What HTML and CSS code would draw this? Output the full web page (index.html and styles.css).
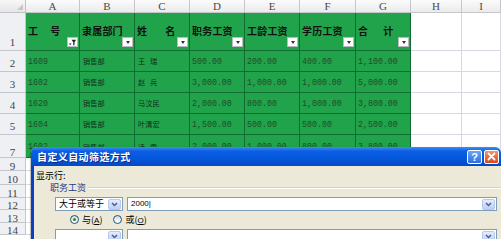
FILE: index.html
```html
<!DOCTYPE html>
<html lang="zh">
<head>
<meta charset="utf-8">
<title>自定义自动筛选方式</title>
<link rel="stylesheet" href="styles.css">
</head>
<body>
<div class="sheet">
  <div class="c corner"><span class="sel"></span></div>
  <div class="c ch">A</div><div class="c ch">B</div><div class="c ch">C</div><div class="c ch">D</div><div class="c ch">E</div><div class="c ch">F</div><div class="c ch">G</div><div class="c ch">H</div><div class="c ch">I</div>

  <div class="c rh rh1">1</div>
  <div class="c g gh"><span>工</span><span class="g12"></span><span>号</span><span class="fb"><svg width="10" height="9" viewBox="0 0 10 9"><path d="M1 5.5h3L2.5 7.5z" fill="#222"/><path d="M4 1.5h5L7.2 4.2v3.3H5.8V4.2z" fill="#222"/></svg></span></div>
  <div class="c g gh">隶属部门<span class="fb"><i class="tri"></i></span></div>
  <div class="c g gh"><span>姓</span><span class="g19"></span><span>名</span><span class="fb"><i class="tri"></i></span></div>
  <div class="c g gh">职务工资<span class="fb"><i class="tri"></i></span></div>
  <div class="c g gh">工龄工资<span class="fb"><i class="tri"></i></span></div>
  <div class="c g gh">学历工资<span class="fb"><i class="tri"></i></span></div>
  <div class="c g gh"><span>合</span><span class="g16"></span><span>计</span><span class="fb"><i class="tri"></i></span></div>
  <div class="c w"></div><div class="c w"></div>

  <div class="c rh">2</div>
  <div class="c g num">1609</div><div class="c g zh">销售部</div><div class="c g zh">王&nbsp;&nbsp;&nbsp;瑞</div><div class="c g num">500.00</div><div class="c g num">200.00</div><div class="c g num">400.00</div><div class="c g num">1,100.00</div>
  <div class="c w"></div><div class="c w"></div>

  <div class="c rh">3</div>
  <div class="c g num">1602</div><div class="c g zh">销售部</div><div class="c g zh">赵&nbsp;&nbsp;&nbsp;兵</div><div class="c g num">3,000.00</div><div class="c g num">1,000.00</div><div class="c g num">1,000.00</div><div class="c g num">5,000.00</div>
  <div class="c w"></div><div class="c w"></div>

  <div class="c rh">4</div>
  <div class="c g num">1620</div><div class="c g zh">销售部</div><div class="c g zh">马汶民</div><div class="c g num">2,000.00</div><div class="c g num">800.00</div><div class="c g num">1,000.00</div><div class="c g num">3,800.00</div>
  <div class="c w"></div><div class="c w"></div>

  <div class="c rh">5</div>
  <div class="c g num">1604</div><div class="c g zh">销售部</div><div class="c g zh">叶清宏</div><div class="c g num">1,500.00</div><div class="c g num">500.00</div><div class="c g num">500.00</div><div class="c g num">2,500.00</div>
  <div class="c w"></div><div class="c w"></div>

  <div class="c rh rh7">7</div>
  <div class="c g num r7">1602</div><div class="c g zh r7">销售部</div><div class="c g zh r7">凌&nbsp;&nbsp;&nbsp;霄</div><div class="c g num r7">2,000.00</div><div class="c g num r7">1,000.00</div><div class="c g num r7">800.00</div><div class="c g num r7">3,800.00</div>
  <div class="c w"></div><div class="c w"></div>

  <div class="c rh">9</div><div class="c w"></div><div class="c w"></div><div class="c w"></div><div class="c w"></div><div class="c w"></div><div class="c w"></div><div class="c w"></div><div class="c w"></div><div class="c w"></div>
  <div class="c rh">10</div><div class="c w"></div><div class="c w"></div><div class="c w"></div><div class="c w"></div><div class="c w"></div><div class="c w"></div><div class="c w"></div><div class="c w"></div><div class="c w"></div>
  <div class="c rh">11</div><div class="c w"></div><div class="c w"></div><div class="c w"></div><div class="c w"></div><div class="c w"></div><div class="c w"></div><div class="c w"></div><div class="c w"></div><div class="c w"></div>
  <div class="c rh">12</div><div class="c w"></div><div class="c w"></div><div class="c w"></div><div class="c w"></div><div class="c w"></div><div class="c w"></div><div class="c w"></div><div class="c w"></div><div class="c w"></div>
  <div class="c rh">13</div><div class="c w"></div><div class="c w"></div><div class="c w"></div><div class="c w"></div><div class="c w"></div><div class="c w"></div><div class="c w"></div><div class="c w"></div><div class="c w"></div>
  <div class="c rh">14</div><div class="c w"></div><div class="c w"></div><div class="c w"></div><div class="c w"></div><div class="c w"></div><div class="c w"></div><div class="c w"></div><div class="c w"></div><div class="c w"></div>
</div>

<div class="dlg">
  <div class="tb">
    <span class="title">自定义自动筛选方式</span>
    <span class="btns">
      <span class="tbtn help">?</span>
      <span class="tbtn close"><svg width="9" height="9" viewBox="0 0 9 9"><path d="M1.5 1.5l6 6M7.5 1.5l-6 6" stroke="#fff" stroke-width="1.8" stroke-linecap="round"/></svg></span>
    </span>
  </div>
  <div class="body">
    <div class="lbl">显示行:</div>
    <div class="grp"><span class="grpname">职务工资</span><span class="grpline"></span></div>
    <div class="crow">
      <div class="combo"><span class="ctext">大于或等于</span><span class="arr"><svg width="7" height="5" viewBox="0 0 7 5"><path d="M1 1l2.5 2.5L6 1" stroke="#4a5f8c" stroke-width="1.5" fill="none"/></svg></span></div>
      <div class="combo wide"><span class="ctext val">2000|</span><span class="arr"><svg width="7" height="5" viewBox="0 0 7 5"><path d="M1 1l2.5 2.5L6 1" stroke="#4a5f8c" stroke-width="1.5" fill="none"/></svg></span></div>
    </div>
    <div class="radios">
      <span class="radio on"></span><span class="rlabel">与(<u>A</u>)</span>
      <span class="radio"></span><span class="rlabel">或(<u>O</u>)</span>
    </div>
    <div class="crow">
      <div class="combo"><span class="ctext"></span><span class="arr"><svg width="7" height="5" viewBox="0 0 7 5"><path d="M1 1l2.5 2.5L6 1" stroke="#4a5f8c" stroke-width="1.5" fill="none"/></svg></span></div>
      <div class="combo wide"><span class="ctext"></span><span class="arr"><svg width="7" height="5" viewBox="0 0 7 5"><path d="M1 1l2.5 2.5L6 1" stroke="#4a5f8c" stroke-width="1.5" fill="none"/></svg></span></div>
    </div>
  </div>
</div>
</body>
</html>
```

FILE: styles.css
```css
* { box-sizing: border-box; margin: 0; padding: 0; }
html, body { overflow: hidden; }
body {
  width: 501px;
  height: 239px;
  background: #fff;
  position: relative;
  font-family: "Noto Sans CJK SC", sans-serif;
}
.sheet {
  display: grid;
  grid-template-columns: 26px 54px 55px 55px 55px 55px 56px 55px 51px 39px;
  grid-template-rows: 13px 38px 21px 21px 21px 21px 23px 13px 14px 13px 12px 13px 12px;
}
.c {
  border-right: 1px solid #d5dae2;
  border-bottom: 1px solid #d5dae2;
  overflow: hidden;
  white-space: nowrap;
  display: flex;
  align-items: center;
  position: relative;
}
.corner {
  background: linear-gradient(#f7f7f7, #e6e6e6);
  border-color: #bfc3c8;
}
.sel {
  position: absolute;
  right: 2px;
  bottom: 2px;
  width: 0;
  height: 0;
  border-left: 6px solid transparent;
  border-bottom: 6px solid #c8c8c8;
}
.ch {
  background: linear-gradient(#fbfbfb, #ebebeb);
  border-color: #c3c6cb;
  justify-content: center;
  font-family: "Liberation Serif", serif;
  font-size: 11px;
  color: #4a4a4a;
  line-height: 12px;
}
.rh {
  background: #eef0f3;
  border-color: #c3c6cb;
  justify-content: center;
  font-family: "Liberation Serif", serif;
  font-size: 11px;
  color: #444;
  padding-top: 3px;
}
.rh1 { align-items: flex-end; padding-bottom: 2px; }
.rh7 { align-items: flex-start; padding-top: 11px; }
.g {
  background: #21a34b;
  border-color: #0f6d31;
  color: #1f4a27;
  padding-left: 2px;
}
.w { background: #fff; }
.num {
  font-family: "Liberation Mono", monospace;
  font-size: 8.3px;
  color: #1f4d27;
}
.zh { font-size: 7.2px; padding-left: 3px; color: #0f2e17; }
.r7 { align-items: flex-start; padding-top: 7px; }
.gh {
  font-size: 10px;
  font-weight: bold;
  color: #111;
  padding-left: 2px;
  padding-bottom: 2px;
  letter-spacing: 0.2px;
}
.g12 { display: inline-block; width: 12px; }
.g19 { display: inline-block; width: 18px; }
.g16 { display: inline-block; width: 15px; }
.fb {
  position: absolute;
  right: 1px;
  bottom: 3px;
  width: 11px;
  height: 10px;
  background: #fff;
  border: 1px solid #b8bcc0;
  display: flex;
  align-items: center;
  justify-content: center;
}
.tri {
  width: 0;
  height: 0;
  border-left: 2.5px solid transparent;
  border-right: 2.5px solid transparent;
  border-top: 3px solid #333;
}

/* dialog */
.dlg {
  position: absolute;
  left: 31px;
  top: 147px;
  width: 470px;
  height: 92px;
  background: #ece9d8;
  border-radius: 6px 6px 0 0;
  overflow: hidden;
  box-shadow: -1px 0 1px rgba(0,0,0,0.25);
}
.tb {
  height: 19px;
  background: linear-gradient(#3d8ef6 0%, #0c5fe3 22%, #0457dc 60%, #0349c4 100%);
  display: flex;
  align-items: center;
  justify-content: space-between;
  padding: 0 2px 0 6px;
}
.title {
  color: #fff;
  font-size: 10px;
  font-weight: bold;
  letter-spacing: 0.4px;
  text-shadow: 1px 1px 0 #0a2a8a;
}
.btns { display: flex; gap: 2px; }
.tbtn {
  width: 15px;
  height: 14px;
  border: 1px solid #fff;
  border-radius: 2px;
  display: flex;
  align-items: center;
  justify-content: center;
}
.help {
  background: linear-gradient(#6aa5f7, #2c6fe3);
  color: #fff;
  font-family: "Liberation Sans", sans-serif;
  font-weight: bold;
  font-size: 11px;
}
.close { background: linear-gradient(#f3936a, #d9481f); }
.body {
  border-left: 3px solid #0a40c0;
  height: 73px;
  padding: 4px 0 0 2px;
  font-size: 9px;
  color: #000;
}
.lbl { line-height: 12px; height: 12px; }
.grp {
  display: flex;
  align-items: center;
  margin-left: 14px;
  height: 12px;
}
.grpname { color: #1e3c8c; line-height: 12px; padding-right: 2px; }
.grpline {
  flex: 1;
  height: 2px;
  border-top: 1px solid #d6d2c2;
  border-bottom: 1px solid #fff;
}
.crow {
  display: flex;
  gap: 4px;
  margin-left: 19px;
  margin-top: 3px;
  height: 14px;
}
.combo {
  width: 68px;
  height: 14px;
  background: #fff;
  border: 1px solid #7f9db9;
  display: flex;
  align-items: center;
  justify-content: space-between;
  padding: 0 1px 0 3px;
}
.combo.wide { width: 370px; }
.ctext { font-size: 9px; line-height: 12px; }
.val { font-family: "Liberation Sans", sans-serif; font-size: 8px; }
.arr {
  width: 13px;
  height: 11px;
  background: linear-gradient(#e4ecfd, #bccff6);
  border: 1px solid #b7c8ef;
  border-radius: 2px;
  display: flex;
  align-items: center;
  justify-content: center;
}
.radios {
  display: flex;
  align-items: center;
  height: 14px;
  margin-top: 1px;
  margin-left: 34px;
}
.radio {
  width: 9px;
  height: 9px;
  border-radius: 50%;
  border: 1px solid #1c5180;
  background: linear-gradient(#dcdcd5, #fff);
  display: flex;
  align-items: center;
  justify-content: center;
}
.radio.on::after {
  content: "";
  width: 3px;
  height: 3px;
  border-radius: 50%;
  background: #2e8a2e;
}
.rlabel { margin-left: 3px; margin-right: 11px; }
.rlabel u { font-family: "Liberation Sans", sans-serif; font-size: 8px; }
```
